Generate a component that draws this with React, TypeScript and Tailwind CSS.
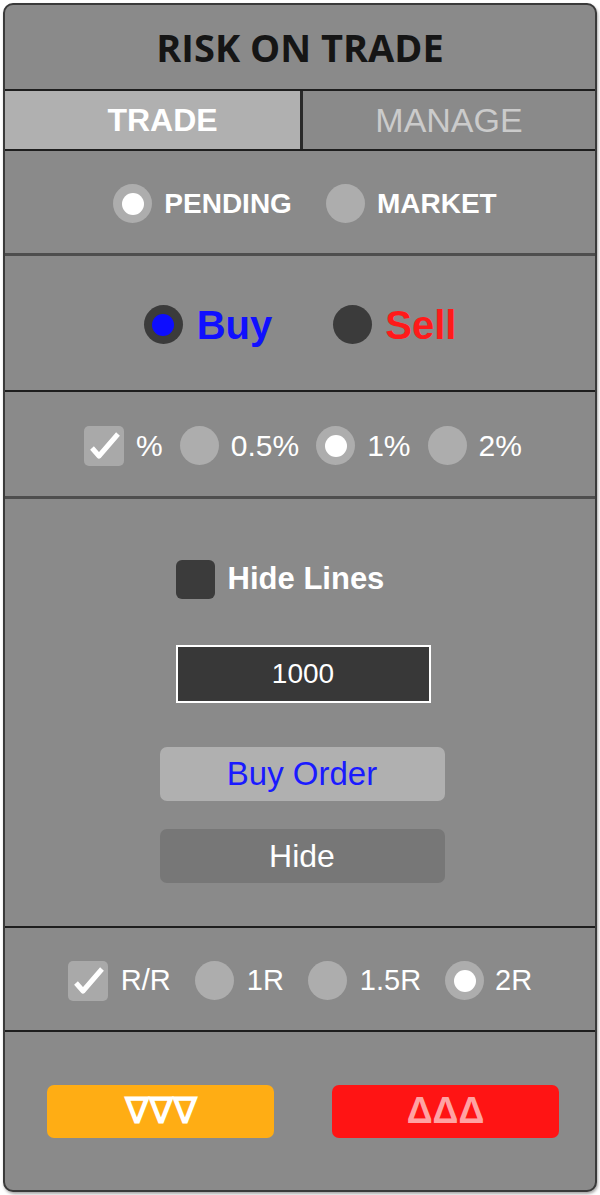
const ARIAL = "font-['Liberation_Sans',Arial,sans-serif]";

function Radio({ on = false, dark = false }: { on?: boolean; dark?: boolean }) {
  return (
    <span
      className={`flex h-[39px] w-[39px] shrink-0 items-center justify-center rounded-full ${
        dark ? "bg-[#3b3b3b]" : "bg-[#adadad]"
      }`}
    >
      {on && <span className={`h-[22px] w-[22px] rounded-full ${dark ? "bg-[#0d0dff]" : "bg-white"}`} />}
    </span>
  );
}

function Check() {
  return (
    <span className="flex h-[40px] w-[40px] shrink-0 items-center justify-center rounded-[5px] bg-[#a9a9a9]">
      <svg width="40" height="40" viewBox="0 0 40 40">
        <path d="M8 22 L15 30 L34 8" fill="none" stroke="white" strokeWidth="5" strokeLinejoin="round" />
      </svg>
    </span>
  );
}

export default function App() {
  return (
    <div className={`h-[1195px] w-[600px] bg-white p-[3px] ${ARIAL}`}>
      <div className="flex h-[1189px] flex-col overflow-hidden rounded-[10px] border-2 border-[#3a3a3a] bg-[#8a8a8a] shadow-[1px_2px_3px_rgba(0,0,0,0.35)]">
        {/* title */}
        <div className="flex h-[86px] items-center justify-center border-b-2 border-[#1e1e1e] pt-[-2px]">
          <span className="font-['Open_Sans',sans-serif] text-[38px] font-bold leading-none text-[#151515]">
            RISK ON TRADE
          </span>
        </div>

        {/* tabs */}
        <div className="flex h-[60px] border-b-2 border-[#1e1e1e]">
          <div className="flex w-[298px] items-center justify-center border-r-[3px] border-[#2a2a2a] bg-[#b0b0b0] pl-[20px] text-[32px] font-bold text-white">
            TRADE
          </div>
          <div className="flex flex-1 items-center justify-center text-[34px] text-[#cbcbcb]">MANAGE</div>
        </div>

        {/* order type */}
        <div className="flex h-[105px] items-center justify-center border-b-[3px] border-[#4e4e4e] pl-[10px] pt-[3px] text-[28px] font-bold text-white">
          <Radio on />
          <span className="ml-[12px]">PENDING</span>
          <span className="ml-[34px]">
            <Radio />
          </span>
          <span className="ml-[12px]">MARKET</span>
        </div>

        {/* direction */}
        <div className="flex h-[136px] items-center justify-center border-b-2 border-[#1e1e1e] pt-[3px] text-[40px] font-bold">
          <Radio on dark />
          <span className="ml-[14px] text-[#1010ff]">Buy</span>
          <span className="ml-[61px]">
            <Radio dark />
          </span>
          <span className="ml-[13px] text-[#ff1a1a]">Sell</span>
        </div>

        {/* risk */}
        <div className="flex h-[107px] items-center justify-center border-b-[3px] border-[#4e4e4e] pl-[6px] pt-[3px] text-[30px] text-white">
          <Check />
          <span className="ml-[12px]">%</span>
          <span className="ml-[17px]">
            <Radio />
          </span>
          <span className="ml-[12px]">0.5%</span>
          <span className="ml-[17px]">
            <Radio on />
          </span>
          <span className="ml-[12px]">1%</span>
          <span className="ml-[17px]">
            <Radio />
          </span>
          <span className="ml-[12px]">2%</span>
        </div>

        {/* lines */}
        <div className="flex h-[429px] flex-col items-center border-b-2 border-[#1e1e1e] pt-[61px]">
          <div className="mr-[40px] flex h-[39px] items-center">
            <span className="h-[39px] w-[39px] rounded-[6px] bg-[#3b3b3b]" />
            <span className="ml-[13px] text-[31px] font-bold text-white">Hide Lines</span>
          </div>
          <div className="ml-[6px] mt-[46px] flex h-[58px] w-[255px] items-center justify-center border-2 border-white bg-[#383838] text-[28px] text-white">
            1000
          </div>
          <button className="ml-[4px] mt-[44px] flex h-[54px] w-[285px] items-center justify-center rounded-[7px] bg-[#b0b0b0] text-[33px] text-[#1a1aff]">
            Buy Order
          </button>
          <button className="ml-[4px] mt-[28px] flex h-[54px] w-[285px] items-center justify-center rounded-[7px] bg-[#777777] text-[32px] text-white">
            Hide
          </button>
        </div>

        {/* reward */}
        <div className="flex h-[104px] items-center justify-center border-b-2 border-[#1e1e1e] pt-[3px] text-[29px] text-white">
          <Check />
          <span className="ml-[13px]">R/R</span>
          <span className="ml-[24px]">
            <Radio />
          </span>
          <span className="ml-[13px]">1R</span>
          <span className="ml-[24px]">
            <Radio />
          </span>
          <span className="ml-[13px]">1.5R</span>
          <span className="ml-[24px]">
            <Radio on />
          </span>
          <span className="ml-[11px]">2R</span>
        </div>

        {/* move buttons */}
        <div className="flex flex-1 items-center justify-between pl-[42px] pr-[36px]">
          <button className="flex h-[53px] w-[227px] items-center justify-center rounded-[7px] bg-[#ffad14] text-[36px] font-bold text-white">
            ∇∇∇
          </button>
          <button className="flex h-[53px] w-[227px] items-center justify-center rounded-[7px] bg-[#ff1414] text-[36px] font-bold text-[#ffa3a3]">
            ΔΔΔ
          </button>
        </div>
      </div>
    </div>
  );
}
